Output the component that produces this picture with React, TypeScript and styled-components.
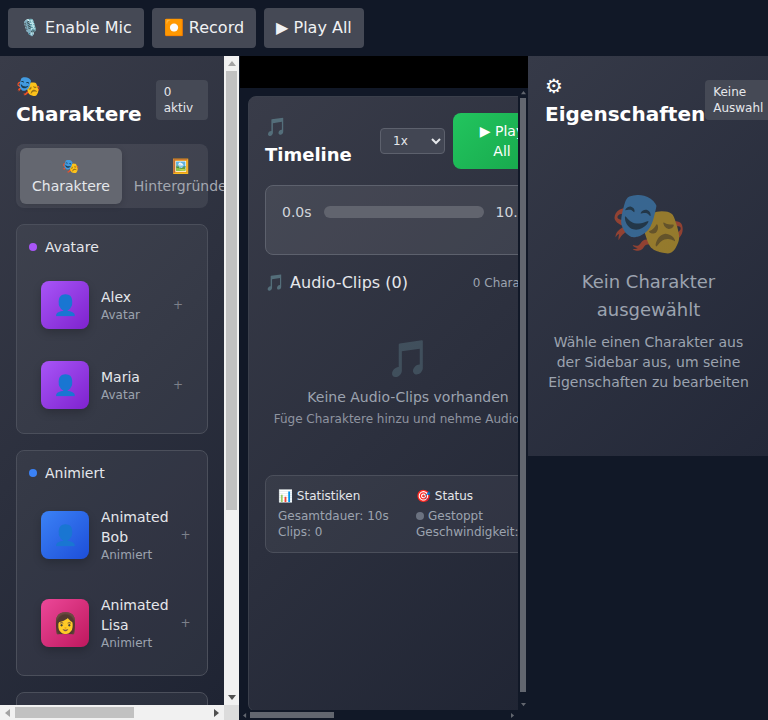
import React from "react";
import styled, { createGlobalStyle } from "styled-components";

const GlobalStyle = createGlobalStyle`
  html, body {
    margin: 0;
    padding: 0;
    height: 100%;
    overflow: hidden;
    background: #111827;
    font-family: "DejaVu Sans", sans-serif;
  }
  * {
    box-sizing: border-box;
  }
`;

type Character = { name: string; type: string; icon: string; tone: "purple" | "blue" | "pink" };

const avatars: Character[] = [
  { name: "Alex", type: "Avatar", icon: "👤", tone: "purple" },
  { name: "Maria", type: "Avatar", icon: "👤", tone: "purple" }
];

const animated: Character[] = [
  { name: "Animated Bob", type: "Animiert", icon: "👤", tone: "blue" },
  { name: "Animated Lisa", type: "Animiert", icon: "👩", tone: "pink" }
];

const tones = {
  purple: "linear-gradient(135deg, #a855f7, #7e22ce)",
  blue: "linear-gradient(135deg, #3b82f6, #1d4ed8)",
  pink: "linear-gradient(135deg, #ec4899, #be185d)"
};

const ARROWS = {
  up: "0,5 8,5 4,0",
  down: "0,0 8,0 4,5",
  left: "5,0 5,8 0,4",
  right: "0,0 0,8 5,4"
};

type Direction = keyof typeof ARROWS;

const ScrollArrow = ({ dir, color, size }: { dir: Direction; color: string; size: number }) => {
  const wide = dir === "up" || dir === "down";
  return (
    <svg
      width={wide ? size : (size * 5) / 8}
      height={wide ? (size * 5) / 8 : size}
      viewBox={wide ? "0 0 8 5" : "0 0 5 8"}
    >
      <polygon points={ARROWS[dir]} fill={color} />
    </svg>
  );
};

const CharacterRow = ({ character }: { character: Character }) => (
  <Item>
    <Avatar $tone={character.tone}>{character.icon}</Avatar>
    <ItemText>
      <ItemName>{character.name}</ItemName>
      <ItemType>{character.type}</ItemType>
    </ItemText>
    <AddMark>+</AddMark>
  </Item>
);

const App = () => (
  <Page>
    <GlobalStyle />
    <TopBar>
      <TopButton>🎙️ Enable Mic</TopButton>
      <TopButton>⏺️ Record</TopButton>
      <TopButton>▶ Play All</TopButton>
    </TopBar>
    <Workspace>
      <Sidebar>
        <SidebarView>
          <PanelHeader>
            <PanelTitle>🎭 Charaktere</PanelTitle>
            <Badge>0 aktiv</Badge>
          </PanelHeader>
          <Tabs>
            <Tab $active>
              <TabIcon>🎭</TabIcon>
              Charaktere
            </Tab>
            <Tab>
              <TabIcon>🖼️</TabIcon>
              Hintergründe
            </Tab>
          </Tabs>
          <Section>
            <SectionHeader>
              <Dot $color="#a855f7" />
              Avatare
            </SectionHeader>
            <ItemList>
              {avatars.map(c => (
                <CharacterRow key={c.name} character={c} />
              ))}
            </ItemList>
          </Section>
          <Section>
            <SectionHeader>
              <Dot $color="#3b82f6" />
              Animiert
            </SectionHeader>
            <ItemList>
              {animated.map(c => (
                <CharacterRow key={c.name} character={c} />
              ))}
            </ItemList>
          </Section>
          <LastSection />
        </SidebarView>
        <LightBarV>
          <LightButton>
            <ScrollArrow dir="up" color="#a3a3a3" size={8} />
          </LightButton>
          <BarTrack>
            <LightThumbV />
          </BarTrack>
          <LightButton>
            <ScrollArrow dir="down" color="#505050" size={8} />
          </LightButton>
        </LightBarV>
        <LightBarH>
          <LightButton>
            <ScrollArrow dir="left" color="#a3a3a3" size={8} />
          </LightButton>
          <BarTrack>
            <LightThumbH />
          </BarTrack>
          <LightButton>
            <ScrollArrow dir="right" color="#505050" size={8} />
          </LightButton>
        </LightBarH>
        <LightCorner />
      </Sidebar>
      <Center>
        <Stage />
        <TimelineScroller>
          <TimelineView>
            <TimelinePanel>
              <TimelineHeader>
                <TimelineTitle>🎵 Timeline</TimelineTitle>
                <TimelineActions>
                  <SpeedSelect defaultValue="1x">
                    <option>0.5x</option>
                    <option>1x</option>
                    <option>1.5x</option>
                    <option>2x</option>
                  </SpeedSelect>
                  <PlayButton>▶ Play All</PlayButton>
                </TimelineActions>
              </TimelineHeader>
              <ProgressBox>
                <ProgressRow>
                  <TimeLabel>0.0s</TimeLabel>
                  <ProgressTrack />
                  <TimeLabel>10.0s</TimeLabel>
                </ProgressRow>
              </ProgressBox>
              <ClipsHeader>
                <ClipsTitle>🎵 Audio-Clips (0)</ClipsTitle>
                <ClipsCount>0 Charaktere</ClipsCount>
              </ClipsHeader>
              <ClipsEmpty>
                <ClipsEmptyIcon>🎵</ClipsEmptyIcon>
                <ClipsEmptyTitle>Keine Audio-Clips vorhanden</ClipsEmptyTitle>
                <ClipsEmptyHint>Füge Charaktere hinzu und nehme Audio auf</ClipsEmptyHint>
              </ClipsEmpty>
              <StatsBox>
                <div>
                  <StatsTitle>📊 Statistiken</StatsTitle>
                  <StatsLine>Gesamtdauer: 10s</StatsLine>
                  <StatsLine>Clips: 0</StatsLine>
                </div>
                <div>
                  <StatsTitle>🎯 Status</StatsTitle>
                  <StatsLine>
                    <StatusDot />
                    Gestoppt
                  </StatsLine>
                  <StatsLine>Geschwindigkeit: 1x</StatsLine>
                </div>
              </StatsBox>
            </TimelinePanel>
          </TimelineView>
          <DarkBarV>
            <DarkButton>
              <ScrollArrow dir="up" color="#62666f" size={5} />
            </DarkButton>
            <BarTrack>
              <DarkThumbV />
            </BarTrack>
            <DarkButton>
              <ScrollArrow dir="down" color="#62666f" size={5} />
            </DarkButton>
          </DarkBarV>
          <DarkBarH>
            <DarkButton>
              <ScrollArrow dir="left" color="#62666f" size={5} />
            </DarkButton>
            <BarTrack>
              <DarkThumbH />
            </BarTrack>
            <DarkButton>
              <ScrollArrow dir="right" color="#62666f" size={5} />
            </DarkButton>
          </DarkBarH>
        </TimelineScroller>
      </Center>
      <Properties>
        <PanelHeader>
          <PanelTitle>⚙ Eigenschaften</PanelTitle>
          <Badge>Keine Auswahl</Badge>
        </PanelHeader>
        <NoSelection>
          <NoSelectionIcon>🎭</NoSelectionIcon>
          <NoSelectionTitle>Kein Charakter ausgewählt</NoSelectionTitle>
          <NoSelectionText>
            Wähle einen Charakter aus der Sidebar aus, um seine Eigenschaften zu bearbeiten
          </NoSelectionText>
        </NoSelection>
      </Properties>
    </Workspace>
  </Page>
);

const Page = styled.div`
  width: 768px;
  height: 720px;
  display: flex;
  flex-direction: column;
  overflow: hidden;
  background: #111827;
`;

const TopBar = styled.header`
  height: 56px;
  flex: none;
  display: flex;
  align-items: flex-start;
  gap: 8px;
  padding: 8px;
  background: #111827;
`;

const TopButton = styled.button`
  height: 40px;
  padding: 8px 12px;
  border: 0;
  border-radius: 4px;
  background: #454955;
  color: #f0f1f3;
  font: 16px/24px "DejaVu Sans", sans-serif;
`;

const Workspace = styled.main`
  flex: 1;
  min-height: 0;
  display: flex;
  align-items: flex-start;
`;

const Sidebar = styled.aside`
  width: 240px;
  height: 664px;
  flex: none;
  display: grid;
  grid-template-columns: 224px 15px;
  grid-template-rows: 649px 15px;
  border-right: 1px solid #111827;
`;

const SidebarView = styled.div`
  overflow: hidden;
  padding: 16px;
  background: linear-gradient(135deg, #393c49, #1f2433);
`;

const LightBarV = styled.div`
  display: flex;
  flex-direction: column;
  background: #f1f1f1;
`;

const LightBarH = styled.div`
  display: flex;
  background: #f1f1f1;
`;

const LightButton = styled.div`
  width: 15px;
  height: 15px;
  flex: none;
  display: flex;
  align-items: center;
  justify-content: center;
`;

const BarTrack = styled.div`
  flex: 1;
  min-width: 0;
  min-height: 0;
`;

const LightThumbV = styled.div`
  width: 11px;
  height: 439px;
  margin-left: 2px;
  background: #c1c1c1;
`;

const LightThumbH = styled.div`
  width: 119px;
  height: 11px;
  margin-top: 2px;
  background: #c1c1c1;
`;

const LightCorner = styled.div`
  background: #dcdcdc;
`;

const PanelHeader = styled.div`
  display: flex;
  align-items: center;
  justify-content: space-between;
  margin-bottom: 16px;
`;

const PanelTitle = styled.h2`
  margin: 0;
  color: #fff;
  font-size: 20px;
  line-height: 28px;
  font-weight: 700;
`;

const Badge = styled.span`
  padding: 4px 8px;
  border-radius: 4px;
  background: #454955;
  color: #e5e7eb;
  font-size: 12px;
  line-height: 16px;
`;

const Tabs = styled.div`
  display: flex;
  padding: 4px;
  margin-bottom: 16px;
  border-radius: 8px;
  background: rgba(255, 255, 255, 0.08);
`;

const Tab = styled.div<{ $active?: boolean }>`
  flex: none;
  padding: 8px 12px;
  border-radius: 6px;
  text-align: center;
  font-size: 14px;
  line-height: 20px;
  color: ${p => (p.$active ? "#e5e7eb" : "#a3a7b0")};
  background: ${p => (p.$active ? "#646770" : "transparent")};
  box-shadow: ${p => (p.$active ? "0 2px 6px rgba(0, 0, 0, 0.15)" : "none")};
`;

const TabIcon = styled.div`
  font-size: 14px;
  line-height: 20px;
`;

const Section = styled.section`
  margin-bottom: 16px;
  border: 1px solid #4b4f5b;
  border-radius: 8px;
  background: rgba(255, 255, 255, 0.05);
`;

const LastSection = styled(Section)`
  height: 263px;
  margin-bottom: 0;
`;

const SectionHeader = styled.div`
  display: flex;
  align-items: center;
  gap: 8px;
  padding: 12px 12px 0;
  color: #e5e7eb;
  font-size: 14px;
  line-height: 20px;
`;

const Dot = styled.span<{ $color: string }>`
  width: 8px;
  height: 8px;
  border-radius: 50%;
  background: ${p => p.$color};
`;

const ItemList = styled.div`
  padding: 8px;
`;

const Item = styled.div`
  display: flex;
  align-items: center;
  gap: 12px;
  padding: 16px;
`;

const Avatar = styled.div<{ $tone: Character["tone"] }>`
  width: 48px;
  height: 48px;
  flex: none;
  display: flex;
  align-items: center;
  justify-content: center;
  border-radius: 8px;
  font-size: 20px;
  background: ${p => tones[p.$tone]};
  box-shadow: 0 4px 8px rgba(0, 0, 0, 0.2);
`;

const ItemText = styled.div`
  flex: 1;
`;

const ItemName = styled.div`
  color: #e5e7eb;
  font-size: 14px;
  line-height: 20px;
`;

const ItemType = styled.div`
  color: #9ca3af;
  font-size: 12px;
  line-height: 16px;
`;

const AddMark = styled.span`
  color: #7d818b;
  font-size: 12px;
  line-height: 16px;
`;

const Center = styled.div`
  width: 288px;
  height: 664px;
  flex: none;
  display: flex;
  flex-direction: column;
`;

const Stage = styled.div`
  height: 32px;
  flex: none;
  background: #000;
`;

const TimelineScroller = styled.div`
  flex: 1;
  min-height: 0;
  display: grid;
  grid-template-columns: 278px 10px;
  grid-template-rows: 622px 10px;
  background: #111827;
`;

const TimelineView = styled.div`
  overflow: hidden;
  padding: 8px;
`;

const DarkBarV = styled.div`
  display: flex;
  flex-direction: column;
`;

const DarkBarH = styled.div`
  display: flex;
`;

const DarkButton = styled.div`
  width: 10px;
  height: 10px;
  flex: none;
  display: flex;
  align-items: center;
  justify-content: center;
`;

const DarkThumbV = styled.div`
  width: 6px;
  height: 594px;
  margin-left: 2px;
  background: #62666f;
`;

const DarkThumbH = styled.div`
  width: 84px;
  height: 6px;
  margin-top: 2px;
  background: #62666f;
`;

const TimelinePanel = styled.div`
  width: 320px;
  height: 616px;
  padding: 16px;
  border: 1px solid #3a3f4b;
  border-radius: 8px;
  background: linear-gradient(135deg, #393c49, #1f2433);
`;

const TimelineHeader = styled.div`
  display: flex;
  align-items: center;
  justify-content: space-between;
  margin-bottom: 16px;
`;

const TimelineTitle = styled.h3`
  margin: 0;
  width: min-content;
  color: #fff;
  font-size: 18px;
  line-height: 28px;
  font-weight: 700;
`;

const TimelineActions = styled.div`
  display: flex;
  align-items: center;
  gap: 8px;
`;

const SpeedSelect = styled.select`
  width: 65px;
  height: 26px;
  padding: 4px 8px;
  border: 1px solid #5d616d;
  border-radius: 4px;
  background: #424653;
  color: #e5e7eb;
  font: 12px "DejaVu Sans", sans-serif;
`;

const PlayButton = styled.button`
  width: 98px;
  padding: 8px 24px;
  border: 0;
  border-radius: 8px;
  background: linear-gradient(135deg, #22c55e, #16a34a);
  color: #fff;
  font: 14px/20px "DejaVu Sans", sans-serif;
`;

const ProgressBox = styled.div`
  padding: 16px;
  margin-bottom: 16px;
  border: 1px solid #5d616d;
  border-radius: 8px;
  background: rgba(255, 255, 255, 0.08);
`;

const ProgressRow = styled.div`
  display: flex;
  align-items: center;
  gap: 12px;
  margin-bottom: 16px;
`;

const TimeLabel = styled.span`
  color: #d1d5db;
  font-size: 14px;
  line-height: 20px;
`;

const ProgressTrack = styled.div`
  flex: 1;
  height: 12px;
  border-radius: 6px;
  background: #61646e;
`;

const ClipsHeader = styled.div`
  display: flex;
  align-items: center;
  justify-content: space-between;
`;

const ClipsTitle = styled.span`
  color: #e5e7eb;
  font-size: 16px;
  line-height: 24px;
`;

const ClipsCount = styled.span`
  color: #9ca3af;
  font-size: 12px;
  line-height: 16px;
`;

const ClipsEmpty = styled.div`
  padding: 40px 0 32px;
  margin-bottom: 16px;
  text-align: center;
`;

const ClipsEmptyIcon = styled.div`
  height: 48px;
  margin-bottom: 4px;
  font-size: 36px;
  line-height: 48px;
  opacity: 0.5;
`;

const ClipsEmptyTitle = styled.div`
  margin-bottom: 4px;
  color: #9ca3af;
  font-size: 14px;
  line-height: 20px;
`;

const ClipsEmptyHint = styled.div`
  color: #8f94a0;
  font-size: 12px;
  line-height: 16px;
`;

const StatsBox = styled.div`
  display: grid;
  grid-template-columns: 1fr 1fr;
  gap: 16px;
  padding: 12px;
  border: 1px solid #4b4f5b;
  border-radius: 8px;
  background: rgba(255, 255, 255, 0.05);
`;

const StatsTitle = styled.div`
  margin-bottom: 4px;
  color: #e5e7eb;
  font-size: 12px;
  line-height: 16px;
`;

const StatsLine = styled.div`
  color: #9ca3af;
  font-size: 12px;
  line-height: 16px;
  white-space: nowrap;
`;

const StatusDot = styled.span`
  display: inline-block;
  width: 8px;
  height: 8px;
  margin-right: 4px;
  border-radius: 50%;
  background: #6b7280;
`;

const Properties = styled.aside`
  width: 240px;
  height: 400px;
  flex: none;
  padding: 16px 16px 16px 17px;
  background: linear-gradient(135deg, #363a48, #232838);
`;

const NoSelection = styled.div`
  padding: 34px 0 32px;
  text-align: center;
`;

const NoSelectionIcon = styled.div`
  height: 90px;
  font-size: 62px;
  line-height: 90px;
  opacity: 0.5;
`;

const NoSelectionTitle = styled.div`
  margin-bottom: 8px;
  color: #9ca3af;
  font-size: 18px;
  line-height: 28px;
`;

const NoSelectionText = styled.div`
  color: #9ca3af;
  font-size: 14px;
  line-height: 20px;
`;

export default App;
